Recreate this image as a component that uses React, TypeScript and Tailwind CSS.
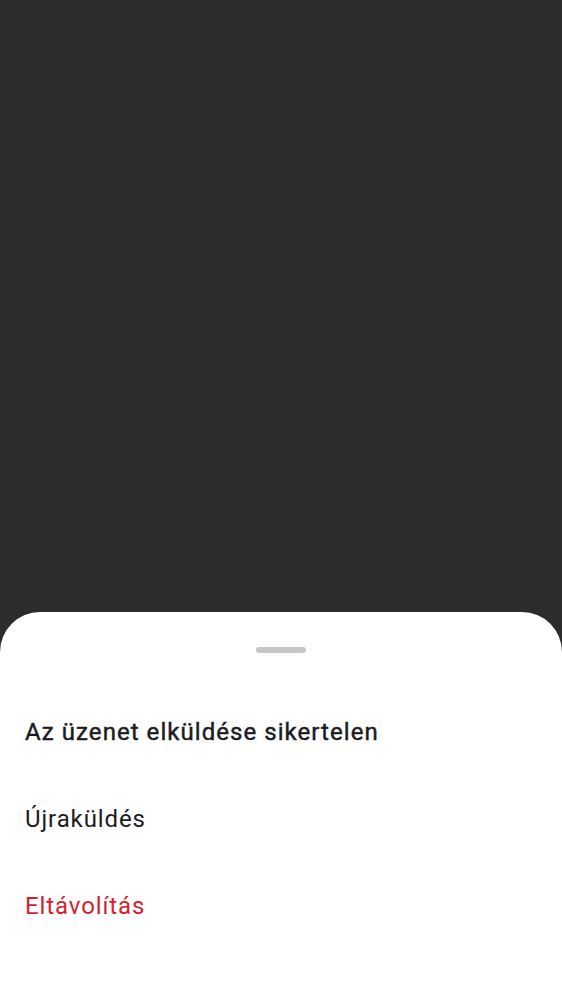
import React from "react";

export default function App() {
  return (
    <div className="flex h-[1000px] w-[562px] flex-col bg-[#2b2c2e]" style={{ fontFamily: "Roboto, 'Noto Sans', sans-serif" }}>
      <div className="flex-1" />
      <div className="flex h-[388px] flex-col rounded-t-[40px] bg-white pt-[35px]">
        <div className="mx-auto h-[6px] w-[50px] rounded-full bg-[#c4c6ca]" />
        <div className="mt-[35px] flex flex-col">
          <div className="flex h-[87px] items-center px-[25px] text-[24px] font-normal tracking-[1.05px] text-[#1c1c1f] [-webkit-text-stroke:0.45px_#1c1c1f]">
            Az üzenet elküldése sikertelen
          </div>
          <div className="flex h-[87px] items-center px-[25px] text-[24px] tracking-[0.9px] text-[#1c1c1f]">
            Újraküldés
          </div>
          <div className="flex h-[87px] items-center px-[25px] text-[24px] tracking-[0.9px] text-[#d41f2f]">
            Eltávolítás
          </div>
        </div>
      </div>
    </div>
  );
}
